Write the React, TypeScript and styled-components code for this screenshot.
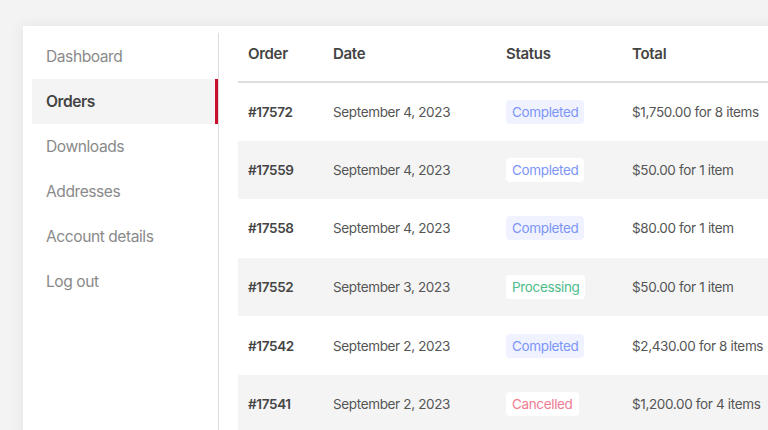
import styled, { createGlobalStyle } from "styled-components";

const GlobalStyle = createGlobalStyle`
  html, body {
    margin: 0;
    padding: 0;
    background: #f3f3f3;
    font-family: Inter, "Noto Sans", sans-serif;
    overflow: hidden;
  }
`;

const Page = styled.div`
  width: 768px;
  height: 430px;
  overflow: hidden;
  padding: 26px 0 0 23px;
  box-sizing: border-box;
`;

const Card = styled.div`
  display: flex;
  width: 800px;
  height: 460px;
  background: #fff;
  box-shadow: 0 0 14px rgba(0, 0, 0, 0.07);
`;

const Sidebar = styled.nav`
  width: 196px;
  flex-shrink: 0;
  padding: 1px 0 0 9px;
  margin-top: 7px;
  box-sizing: border-box;
  border-right: 1px solid #dcdcdc;
`;

const NavItem = styled.div<{ $active?: boolean }>`
  height: 45px;
  display: flex;
  align-items: center;
  padding-left: 14px;
  font-size: 15.6px;
  letter-spacing: -0.45px;
  color: ${(p) => (p.$active ? "#444" : "#8a8a8a")};
  font-weight: ${(p) => (p.$active ? 600 : 400)};
  background: ${(p) => (p.$active ? "#f4f4f4" : "transparent")};
  border-right: 3px solid ${(p) => (p.$active ? "#c8102e" : "transparent")};
`;

const Content = styled.div`
  flex: 1;
  padding: 0 0 0 19px;
`;

const Table = styled.table`
  border-collapse: collapse;
  width: 560px;
  font-size: 13.5px;
  letter-spacing: -0.35px;
`;

const HeadCell = styled.th`
  text-align: left;
  font-weight: 600;
  font-size: 15px;
  letter-spacing: -0.3px;
  color: #444;
  height: 55px;
  padding: 0 10px;
  border-bottom: 2px solid #dedede;
`;

const Row = styled.tr<{ $shaded?: boolean }>`
  height: 58.6px;
  background: ${(p) => (p.$shaded ? "#f4f4f4" : "#fff")};
`;

const Cell = styled.td<{ $bold?: boolean; $width?: number }>`
  padding: 0 10px;
  color: ${(p) => (p.$bold ? "#444" : "#555")};
  font-weight: ${(p) => (p.$bold ? 600 : 400)};
  width: ${(p) => (p.$width ? `${p.$width}px` : "auto")};
  white-space: nowrap;
`;

const statusColors: Record<string, string> = {
  Completed: "#7c95f8",
  Processing: "#4cbb87",
  Cancelled: "#ef7b91",
};

const Badge = styled.span<{ $status: string; $onShade?: boolean }>`
  display: inline-block;
  padding: 4px 6px;
  border-radius: 4px;
  font-size: 13.5px;
  line-height: 16px;
  color: ${(p) => statusColors[p.$status]};
  background: ${(p) =>
    p.$onShade ? "#fff" : p.$status === "Completed" ? "#f0f3ff" : "#fff"};
`;

const navItems = [
  "Dashboard",
  "Orders",
  "Downloads",
  "Addresses",
  "Account details",
  "Log out",
];

const orders = [
  { id: "#17572", date: "September 4, 2023", status: "Completed", total: "$1,750.00 for 8 items" },
  { id: "#17559", date: "September 4, 2023", status: "Completed", total: "$50.00 for 1 item" },
  { id: "#17558", date: "September 4, 2023", status: "Completed", total: "$80.00 for 1 item" },
  { id: "#17552", date: "September 3, 2023", status: "Processing", total: "$50.00 for 1 item" },
  { id: "#17542", date: "September 2, 2023", status: "Completed", total: "$2,430.00 for 8 items" },
  { id: "#17541", date: "September 2, 2023", status: "Cancelled", total: "$1,200.00 for 4 items" },
];

const App: React.FC = () => {
  return (
    <Page>
      <GlobalStyle />
      <Card>
        <Sidebar>
          {navItems.map((item) => (
            <NavItem key={item} $active={item === "Orders"}>
              {item}
            </NavItem>
          ))}
        </Sidebar>
        <Content>
          <Table>
            <thead>
              <tr>
                <HeadCell>Order</HeadCell>
                <HeadCell>Date</HeadCell>
                <HeadCell>Status</HeadCell>
                <HeadCell>Total</HeadCell>
              </tr>
            </thead>
            <tbody>
              {orders.map((o, i) => (
                <Row key={o.id} $shaded={i % 2 === 1}>
                  <Cell $bold $width={65}>{o.id}</Cell>
                  <Cell $width={153}>{o.date}</Cell>
                  <Cell $width={106}>
                    <Badge $status={o.status} $onShade={i % 2 === 1}>
                      {o.status}
                    </Badge>
                  </Cell>
                  <Cell>{o.total}</Cell>
                </Row>
              ))}
            </tbody>
          </Table>
        </Content>
      </Card>
    </Page>
  );
};

export default App;
